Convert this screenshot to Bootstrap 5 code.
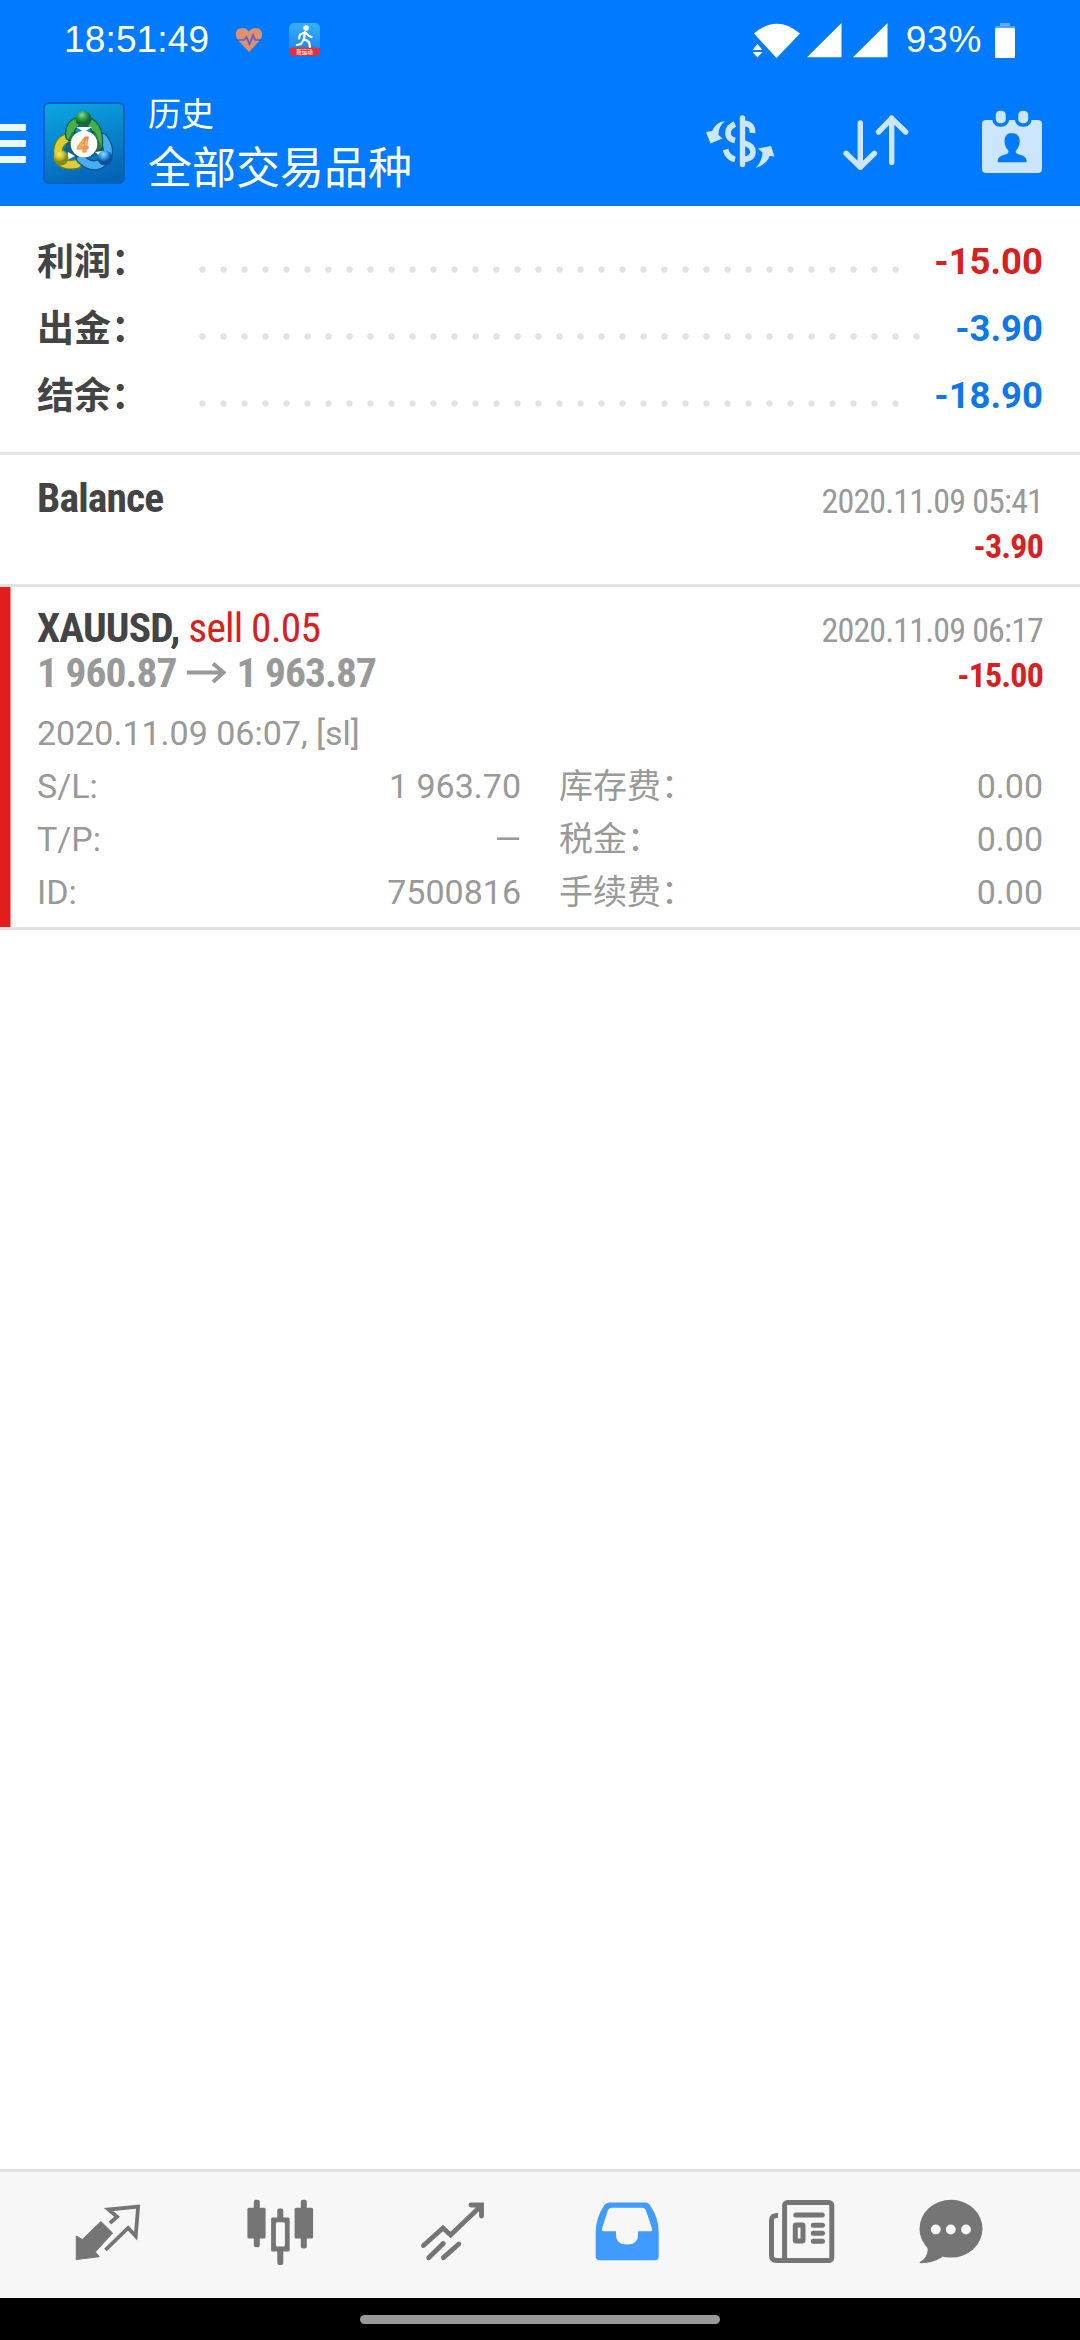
<!DOCTYPE html>
<html lang="zh-CN">
<head>
<meta charset="utf-8">
<meta name="viewport" content="width=device-width, initial-scale=1">
<title>历史</title>
<link href="https://cdn.jsdelivr.net/npm/bootstrap@5.3.0/dist/css/bootstrap.min.css" rel="stylesheet">
<style>
body{font-family:Roboto,"Noto Sans CJK SC",sans-serif;background:#fff;color:#444}
.screen{width:1080px;height:2340px;overflow:hidden}
.topbar{height:206px;background:#007aff;color:#fff;border-bottom:1px solid #0a70e0}
.status{height:80px;padding-left:64px;padding-right:65px;font:37px/84px "Liberation Sans",sans-serif}
.clock{letter-spacing:.15px}
.heart{margin-left:26px}.walk{margin-left:26px}
.pct{letter-spacing:.7px;margin-left:16px}.batt{margin-left:13px}
.appbar{height:126px}
.burger{width:26px;height:39px;margin-right:17px}
.burger i{display:block;height:7px;background:#ebf6ff}
.titles{margin-left:23px;padding-top:3px}
.ttl-sm{font-size:33px;line-height:48px}
.ttl-lg{font-size:44px;line-height:60px}
.actions{margin-right:38px}
.totals{height:249px;padding:23px 37px 0 37px;border-bottom:3px solid #e5e5e5}
.total-row{height:67px;font-weight:700;font-size:37px;line-height:67px}
.total-name{width:155px}
.total-val{font-size:36.5px;line-height:66px}
.dots{height:21px;margin-top:30px;margin-right:28px;background:radial-gradient(circle at center,#e2e2e2 0 2.8px,transparent 3.6px) 0 0/21px 21px repeat-x}
.neg{color:#d8201f}.pos{color:#0f78e8}
.cnd{font-family:"Roboto Condensed",Roboto,sans-serif;font-stretch:75%;letter-spacing:-.85px}
.deal{border-bottom:3px solid #e2e2e2;padding:0 37px}
.deal-a{height:132px}
.deal-b{height:343px;box-shadow:inset 10.5px 0 #e31c1e}
.t42{font-size:41.5px;line-height:45px}
.t34{font-size:34px;line-height:45px}
.price{letter-spacing:-1px}
.arrow{margin:0 10px 0 11px}
.dim{color:#999}
.detail{font-size:34px;line-height:53px;color:#999}
.col-l,.col-r{width:484px}
.tabs{height:129px;border-top:3px solid #e2e2e2;background:#f7f7f7;padding-left:20.5px;color:#757575}
.tab-i{width:173.6px}.tab-z{width:125px}
.home{height:42px;background:#000}
.pill{width:360px;height:9px;background:#999}
svg{display:block;flex:none}
</style>
<script src="https://cdn.jsdelivr.net/npm/bootstrap@5.3.0/dist/js/bootstrap.bundle.min.js"></script>
</head>
<body>
<div class="screen d-flex flex-column">
<header class="topbar flex-shrink-0">
  <div class="status d-flex align-items-center">
    <span class="clock">18:51:49</span>
    <svg class="heart" width="28" height="26" viewBox="0 0 28 26"><path d="M14 25L2.500 12.500C-1 7 1.500 1 7.500 1c3 0 5 1.200 6.500 3.500C15.500 2.200 17.500 1 20.500 1c6 0 8.500 6 5 11.500z" fill="#dd926b"/><path d="M1 13h8l2.500-3 3 7 3.500-9 2 5h7" fill="none" stroke="#24f" stroke-opacity=".7" stroke-width="1.700"/></svg>
    <svg class="walk" width="32" height="34" viewBox="0 0 32 34"><defs><linearGradient id="wk" x1="0" y1="0" x2="0" y2="1"><stop offset="0" stop-color="#35b0fa"/><stop offset="1" stop-color="#1c7cf0"/></linearGradient></defs><rect width="31" height="33" rx="5" fill="url(#wk)"/><circle cx="27" cy="8" r="2" fill="none" stroke="#37b6b8"/><path d="M0 25q15-1.500 31 0v3q-1 5-5 5H5q-4 0-5-5z" fill="#e52f3d"/><circle cx="17" cy="5" r="2.800" fill="#fff"/><path d="M16 9l-1 7 5 3 1 5M15 16l-3 5-4 1M16 9.500l-5 2-1 4M17 10l3 3 2.500 1" fill="none" stroke="#fff" stroke-width="2.200" stroke-linecap="round" stroke-linejoin="round"/><text x="15.500" y="31" font-size="5.500" font-weight="700" text-anchor="middle" fill="#ffe0d8" font-family="Noto Sans CJK SC">新运动</text></svg>
    <svg class="ms-auto" width="138" height="38" viewBox="749 21 138 38"><path d="M751 33.500Q774 14 797 33.500L773.500 58z" fill="#fff"/><path d="M749.500 50h10l-5-6zM749.500 52h10l-5 5.500z" fill="#fff"/><path d="M804 57.300L838.500 23v34.300zM850 57.300L884.500 23v34.300z" fill="#fff"/></svg>
    <span class="pct">93%</span>
    <svg class="batt" width="20" height="36" viewBox="0 0 20 36"><path d="M5 1h10v4H5z" fill="#66adff"/><path d="M0 4h20v2H0z" fill="#4fa3ff"/><rect y="6" width="20" height="30" rx="1" fill="#fff"/></svg>
  </div>
  <div class="appbar d-flex align-items-center">
    <div class="burger d-flex flex-column justify-content-between"><i></i><i></i><i></i></div>
    <svg width="82" height="82" viewBox="0 0 82 82"><defs>
      <linearGradient id="bg" x1=".3" y1="0" x2=".6" y2="1"><stop offset="0" stop-color="#0aa3e2"/><stop offset="1" stop-color="#0563b6"/></linearGradient>
      <radialGradient id="gg" cx=".4" cy=".25"><stop offset="0" stop-color="#8fdc86"/><stop offset=".6" stop-color="#2f9a45"/><stop offset="1" stop-color="#156a35"/></radialGradient>
      <radialGradient id="gy" cx=".4" cy=".25"><stop offset="0" stop-color="#f5ee7a"/><stop offset=".6" stop-color="#cdbf22"/><stop offset="1" stop-color="#7f8a18"/></radialGradient>
      <radialGradient id="gb" cx=".4" cy=".25"><stop offset="0" stop-color="#9bdcff"/><stop offset=".6" stop-color="#2f8fdc"/><stop offset="1" stop-color="#0f4f9c"/></radialGradient></defs>
      <rect x="1" y="1" width="80" height="80" rx="5" fill="url(#bg)" stroke="#0a5fc0" stroke-width="2"/>
      <g fill="none" stroke-linecap="round">
      <path d="M34 62Q14 66 15 48Q17 34 33 36" stroke="#6f7a17" stroke-width="10"/><path d="M34 62Q14 66 15 48Q17 34 33 36" stroke="#d9cf35" stroke-width="7.500"/>
      <path d="M60 36Q70 50 60 60Q50 68 38 57" stroke="#104f93" stroke-width="10"/><path d="M60 36Q70 50 60 60Q50 68 38 57" stroke="#48aef0" stroke-width="7.500"/>
      <path d="M27 34Q26 20 40 19Q57 20 55 44" stroke="#0f5d3a" stroke-width="10"/><path d="M27 34Q26 20 40 19Q57 20 55 44" stroke="#45b04b" stroke-width="7.500"/></g>
      <path d="M29 30L52 29 60 49 48 55 31 55 21 48z" fill="#1c4e48" opacity=".6"/>
      <path d="M33 25l8 5 8-5zM25 50l-1 8 8-4zM52 50l8 7v-8z" fill="#fff"/>
      <circle cx="40.500" cy="17" r="8" fill="url(#gg)"/><circle cx="18" cy="56" r="7.500" fill="url(#gy)"/><circle cx="62" cy="56" r="7.500" fill="url(#gb)"/>
      <circle cx="41" cy="42" r="13.300" fill="#fff"/><text x="40" y="49.500" font-family="Roboto" font-size="21" font-weight="700" font-style="italic" text-anchor="middle" fill="#ffc079" stroke="#e88a3a" stroke-width="1">4</text></svg>
    <div class="titles"><div class="ttl-sm">历史</div><div class="ttl-lg">全部交易品种</div></div>
    <svg class="actions ms-auto" width="340" height="70" viewBox="702 108 340 70">
      <g fill="none" stroke="#cde6ff" stroke-width="5.400" stroke-linecap="round" stroke-linejoin="round">
      <path d="M742.500 118v46.500"/><g stroke-width="5.800" stroke-linecap="butt"><path d="M744 123.500q9 0 8.500 9.500M735 124q-7 3-7 9 0 6 7 7.500M744 143q9 2.500 9 9t-9 7.500M725.500 149.500q2 8 9.500 10"/></g>
      <path d="M860.300 123v43M846 153.300l14.300 13.900 14.200-13.900M891.700 162.500V118M878.500 132l13.200-13.600 14 13.600"/></g>
      <g fill="#cde6ff"><path d="M725 121Q716 122 712 131L706 132 710.500 143.500 722.500 138.500 718.500 135Q718 127 725 121zM756 168Q767 164 769.500 156L774.500 156.500 771 146 758 148.500 762.500 152.500Q762.500 160 756 168z"/>
      <rect x="982" y="120" width="60" height="53" rx="4"/></g>
      <g fill="#cde6ff" stroke="#007aff" stroke-width="3.500"><rect x="994" y="109" width="13.500" height="16" rx="6"/><rect x="1016.500" y="109" width="13.500" height="16" rx="6"/></g>
      <path d="M1012 133c-5 0-7.500 3.500-7.500 8 0 4.500 1.500 7 4 10 0 2.500-1.500 3-4 3.800-5 1.500-6.800 2.500-6.800 7.500h29c0-5-2-6-7-7.500-2.500-.8-4-1.300-4-3.800 2.500-3 4-5.500 4-10 0-4.500-2.700-8-7.700-8z" fill="#007aff"/>
    </svg>
  </div>
</header>
<section class="totals flex-shrink-0">
  <div class="total-row d-flex"><div class="total-name">利润：</div><div class="dots flex-fill"></div><div class="total-val neg">-15.00</div></div>
  <div class="total-row d-flex"><div class="total-name">出金：</div><div class="dots flex-fill"></div><div class="total-val pos">-3.90</div></div>
  <div class="total-row d-flex"><div class="total-name">结余：</div><div class="dots flex-fill"></div><div class="total-val pos">-18.90</div></div>
</section>
<main class="flex-fill">
  <article class="deal deal-a cnd d-flex justify-content-between">
    <div class="t42 fw-bold" style="padding-top:20px">Balance</div>
    <div class="text-end t34" style="padding-top:24px"><div class="dim">2020.11.09 05:41</div><div class="neg fw-bold">-3.90</div></div>
  </article>
  <article class="deal deal-b">
    <div class="cnd d-flex justify-content-between">
      <div class="t42" style="padding-top:18px"><div><b>XAUUSD,</b> <span class="neg">sell 0.05</span></div><div class="price dim fw-bold d-flex align-items-center">1 960.87<svg class="arrow" width="39" height="22" viewBox="0 0 39 22"><path d="M0 10.500h36M26 1.500l10.500 9L26 20" fill="none" stroke="#999" stroke-width="4"/></svg>1 963.87</div></div>
      <div class="text-end t34" style="padding-top:21px"><div class="dim">2020.11.09 06:17</div><div class="neg fw-bold">-15.00</div></div>
    </div>
    <div class="detail" style="padding-top:9px">2020.11.09 06:07, [sl]</div>
    <div class="detail d-flex justify-content-between">
      <div class="col-l"><div class="d-flex justify-content-between"><span>S/L:</span><span>1 963.70</span></div><div class="d-flex justify-content-between"><span>T/P:</span><span>—</span></div><div class="d-flex justify-content-between"><span>ID:</span><span>7500816</span></div></div>
      <div class="col-r"><div class="d-flex justify-content-between"><span>库存费：</span><span>0.00</span></div><div class="d-flex justify-content-between"><span>税金：</span><span>0.00</span></div><div class="d-flex justify-content-between"><span>手续费：</span><span>0.00</span></div></div>
    </div>
  </article>
</main>
<nav class="tabs d-flex align-items-center flex-shrink-0">
  <div class="tab-i d-flex justify-content-center"><svg width="96" height="96" viewBox="59.300 37.500 96 96"><path d="M76.600 86.500V110l23-2.800-4-4.700 17.300-19-11.700-11.500-18.600 18z" fill="currentColor" stroke="currentColor" stroke-linejoin="round"/><path d="M110.200 73.500l7.200-6.200-8.600-7.300 29.600-2.800-2.400 29.300-7.600-8-22.700 22" fill="none" stroke="currentColor" stroke-width="3.800"/></svg></div>
  <div class="tab-i d-flex justify-content-center"><svg width="96" height="96" viewBox="232.900 37.500 96 96" fill="currentColor"><rect x="247.300" y="58.300" width="18.200" height="30.700" rx="1.500"/><rect x="253.700" y="50.300" width="6" height="47.400" rx="2"/><path fill-rule="evenodd" d="M272.500 68h15.600q1.500 0 1.500 1.500v31q0 1.500-1.500 1.500h-15.600q-1.500 0-1.500-1.500v-31q0-1.500 1.500-1.500zm4.800 4.700q-1.500 0-1.500 1.500v21.300q0 1.500 1.500 1.500h6q1.500 0 1.500-1.500V74.200q0-1.500-1.500-1.500z"/><rect x="277.200" y="59" width="6" height="12" rx="2"/><rect x="277.200" y="99" width="6" height="16.500" rx="2"/><rect x="294.500" y="58.300" width="18.500" height="30.700" rx="1.500"/><rect x="300.700" y="50.300" width="6" height="48.700" rx="2"/></svg></div>
  <div class="tab-i d-flex justify-content-center"><svg width="96" height="96" viewBox="406.500 37.500 96 96" fill="none" stroke="currentColor" stroke-width="4.900" stroke-linecap="round"><path d="M424 96l19.500-17.500 7.600 7L482 56M471.500 55.500H482V66.500M429.200 108.200l14.500-14.200M443.900 108.200L459.300 94.500"/></svg></div>
  <div class="tab-i d-flex justify-content-center"><svg width="96" height="96" viewBox="580.100 37.500 96 96" fill="#419bff"><path fill-rule="evenodd" d="M609.500 53h36.500q2.500 0 4 2.500 8.800 13 8.800 27V107q0 3.700-3.700 3.700h-55.600q-3.700 0-3.700-3.700V82.500q0-14 8.700-27Q606.500 53 609.500 53zM612 58.300q-3 0-4 2.500L602 79.500q-.5 2.200 1.500 2.200h12.600V85q0 10 11 10t11-10v-3.300h12.700q2 0 1.500-2.200L646 60.800q-.8-2.500-3.500-2.500z"/></svg></div>
  <div class="tab-i d-flex justify-content-center"><svg width="96" height="96" viewBox="753.700 37.500 96 96" fill="none" stroke="currentColor" stroke-width="5"><rect x="784.300" y="53" width="47.200" height="58" rx="3"/><path d="M777.700 66q-6.500-.5-6.500 5v35q0 5 5 5h10"/><path d="M795.500 65.500h26.500M813 75.700h9.200M813 83.700h9.200M813 91.700h9.200" stroke-linecap="round"/><rect x="795" y="75.600" width="7.700" height="16" rx=".8"/></svg></div>
  <div class="tab-z d-flex justify-content-center"><svg width="96" height="96" viewBox="903 37.500 96 96"><ellipse cx="951" cy="79.200" rx="31.500" ry="28.900" fill="currentColor"/><path d="M927 96q2 6-1.500 11.500-2.500 4-5.700 5-.5 1.200 1 1.200 12 0 22-6.500z" fill="currentColor"/><g fill="#f7f7f7"><circle cx="935.800" cy="80" r="4.900"/><circle cx="950.800" cy="80" r="4.900"/><circle cx="966" cy="80" r="4.900"/></g></svg></div>
</nav>
<div class="home d-flex align-items-center justify-content-center flex-shrink-0"><div class="pill rounded-pill"></div></div>
</div>
</body>
</html>
